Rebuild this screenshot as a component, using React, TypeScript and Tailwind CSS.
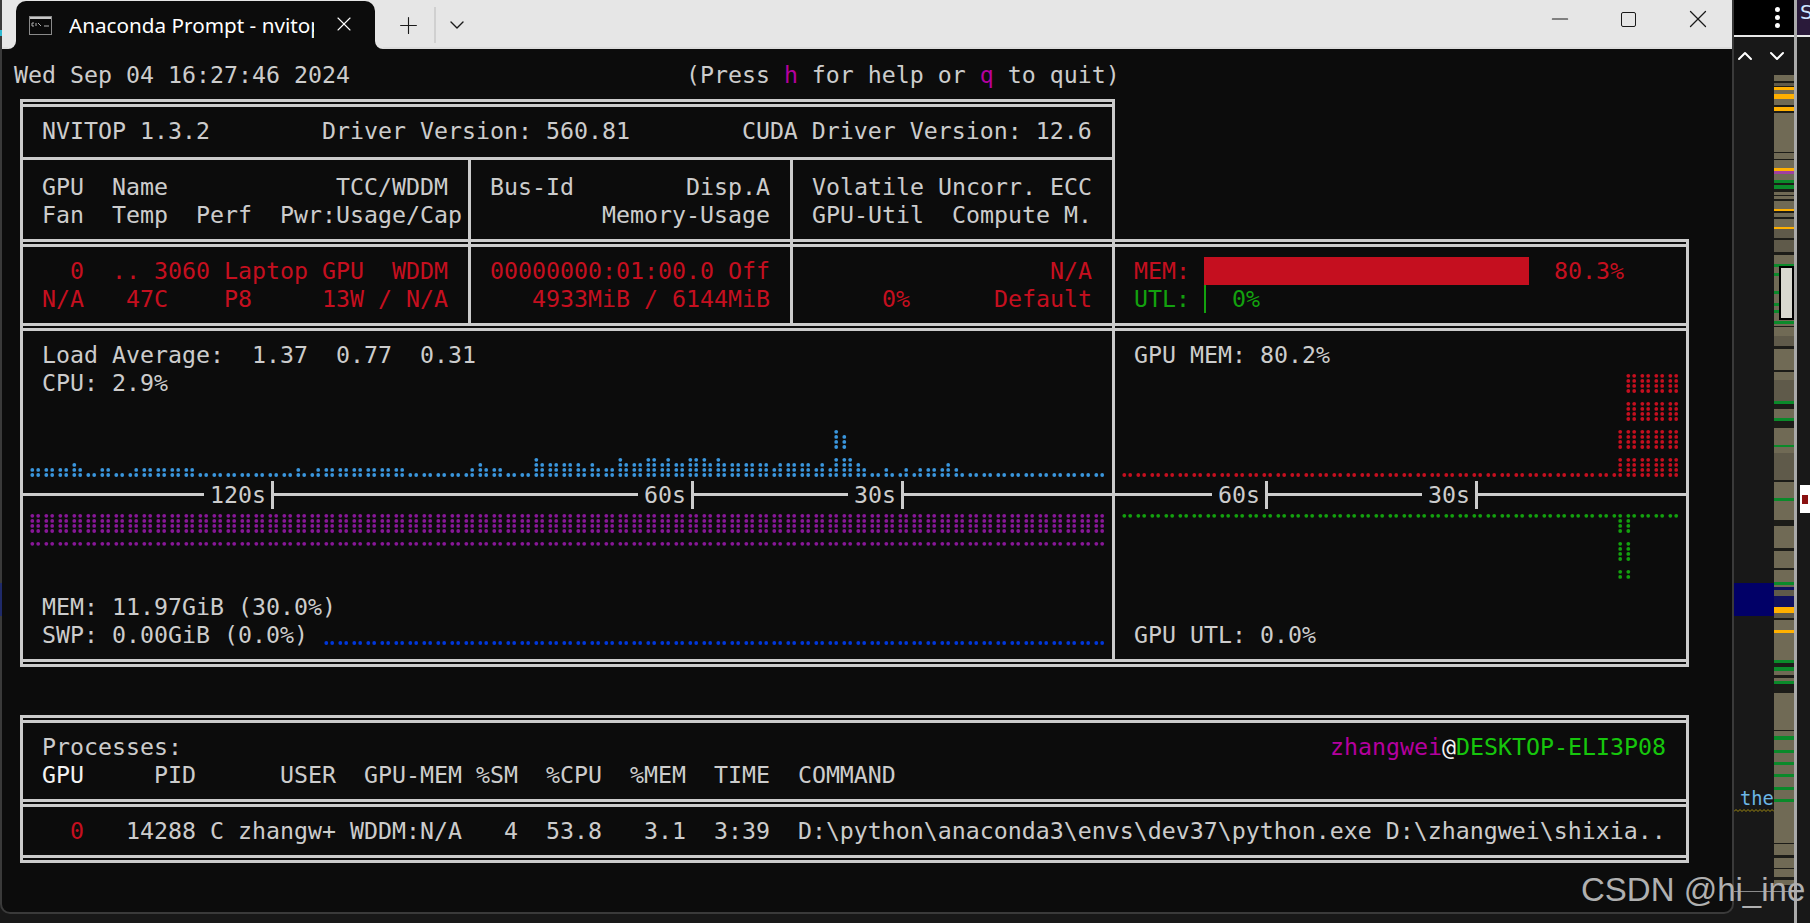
import { ChevronDown, ChevronUp, Minus, Plus, X } from 'lucide-react'
import type { ReactNode } from 'react'

const LEFT_DOTS = [0x40, 0x04, 0x02, 0x01]
const RIGHT_DOTS = [0x80, 0x20, 0x10, 0x08]

// height of the two dot columns in one braille cell, counted from the bottom
function braille(l: number, r: number) {
  let bits = 0
  for (let i = 0; i < l; i++) bits |= LEFT_DOTS[i]
  for (let i = 0; i < r; i++) bits |= RIGHT_DOTS[i]
  return bits === 0 ? ' ' : String.fromCodePoint(0x2800 + bits)
}

const cpuHistory: [number, number][] = [
  [2, 2], [2, 2], [2, 2], [3, 2], [1, 1], [2, 2], [1, 1], [1, 2], [2, 2], [2, 2], [2, 2], [2, 2],
  [1, 1], [1, 1], [1, 1], [1, 1], [1, 1], [1, 1], [1, 1], [2, 1], [1, 2], [2, 2], [2, 2], [2, 2],
  [2, 2], [2, 2], [2, 2], [1, 1], [1, 1], [1, 1], [1, 1], [1, 2], [3, 2], [2, 2], [1, 1], [1, 1],
  [4, 3], [3, 3], [3, 3], [3, 2], [3, 2], [2, 2], [4, 3], [3, 3], [4, 4], [3, 4], [3, 3], [4, 4],
  [4, 3], [4, 3], [3, 3], [3, 3], [3, 3], [2, 3], [3, 3], [3, 3], [2, 3], [2, 8], [7, 4], [3, 2],
  [1, 1], [2, 1], [1, 2], [1, 2], [2, 2], [2, 3], [2, 1], [1, 1], [1, 1], [1, 1], [1, 1], [1, 1],
  [1, 1], [1, 1], [1, 1], [1, 1], [1, 1],
]
const cpuUpper = cpuHistory.map(([l, r]) => braille(Math.max(l - 4, 0), Math.max(r - 4, 0))).join('')
const cpuLower = cpuHistory.map(([l, r]) => braille(Math.min(l, 4), Math.min(r, 4))).join('')

// the terminal draws its graphs in braille; the dots are placed by hand at the cell pitch
const DOT_X = [4.3, 10.2]
const DOT_Y = [6.8, 11.9, 16.9, 22]
const DOT_BITS: [number, number, number][] = [
  [0x01, 0, 0], [0x02, 0, 1], [0x04, 0, 2], [0x40, 0, 3],
  [0x08, 1, 0], [0x10, 1, 1], [0x20, 1, 2], [0x80, 1, 3],
]

function DotRow({ cells, color }: { cells: string; color: string }) {
  const chars = Array.from(cells)
  return (
    <svg className="block shrink-0" width={chars.length * 14} height="28" fill={color}>
      {chars.map((ch, i) => {
        const bits = ch === ' ' ? 0 : ch.codePointAt(0)! - 0x2800
        return DOT_BITS.filter(([bit]) => bits & bit).map(([bit, cx, cy]) => (
          <circle key={`${i}-${bit}`} cx={i * 14 + DOT_X[cx]} cy={DOT_Y[cy]} r="1.9" />
        ))
      })}
    </svg>
  )
}

// [end y, colour] of each band of the editor minimap
const TAN = '#706a55'
const DARK = '#1c1c18'
const ORANGE = '#ffb000'
const GREEN = '#0a8a2a'
const NAVY = '#101060'
const minimap: [number, string][] = [
  [81, TAN], [83, DARK], [86, '#5f5a4a'], [87, DARK], [90, ORANGE], [94, TAN], [99, ORANGE], [105, TAN], [107, DARK],
  [111, ORANGE], [113, DARK], [152, TAN], [153, DARK], [159, TAN], [160, DARK], [168, TAN], [170, ORANGE], [171, ORANGE],
  [174, '#a040a0'], [180, TAN], [183, GREEN], [185, DARK], [189, GREEN], [192, DARK], [195, TAN], [196, DARK], [199, TAN],
  [201, DARK], [209, TAN], [211, ORANGE], [213, DARK], [217, TAN], [219, DARK], [227, TAN], [229, ORANGE], [238, '#5f5a4a'],
  [240, DARK], [252, '#5f5a4a'], [255, DARK], [264, TAN], [267, GREEN], [273, TAN], [276, GREEN], [291, TAN], [294, GREEN],
  [303, TAN], [306, GREEN], [310, TAN], [313, GREEN], [321, TAN], [324, GREEN], [326, TAN], [327, DARK], [336, TAN],
  [346, '#5f5a4a'], [349, DARK], [370, TAN], [372, DARK], [380, TAN], [401, '#5f5a4a'], [404, GREEN], [409, DARK], [418, TAN],
  [421, GREEN], [428, DARK], [445, TAN], [447, GREEN], [453, TAN], [480, '#5f5a4a'], [482, DARK], [498, TAN], [501, GREEN],
  [520, TAN], [526, DARK], [548, TAN], [551, DARK], [568, TAN], [570, DARK], [582, TAN], [585, GREEN], [587, TAN],
  [590, NAVY], [596, '#5f5a4a'], [600, NAVY], [607, NAVY], [613, ORANGE], [618, '#5f5a4a'], [620, DARK], [623, TAN], [630, TAN],
  [633, ORANGE], [660, TAN], [663, GREEN], [667, DARK], [671, GREEN], [675, TAN], [678, DARK], [681, TAN], [684, GREEN],
  [693, DARK], [730, TAN], [731, DARK], [736, TAN], [740, GREEN], [750, TAN], [753, GREEN], [762, TAN], [765, GREEN],
  [774, TAN], [777, GREEN], [787, TAN], [790, GREEN], [799, TAN], [802, GREEN], [843, TAN], [844, DARK], [855, TAN],
  [858, DARK], [868, TAN], [869, DARK], [877, TAN], [880, DARK], [885, TAN],
]

type Vert = 'full' | 'down' | 'up' | 'tee'

// tee: the stem stops at the first line of the pair, the second line runs on under it
const doubleVert: Record<Vert, string> = {
  full: 'h-7 bg-[#cccccc]',
  down: 'mt-[10px] h-[18px] bg-[#cccccc]',
  up: 'h-[18px] bg-[#cccccc]',
  tee: 'h-[18px] border-t-[13px] border-b-[3px] border-[#cccccc]',
}
const singleVert: Record<Vert, string> = {
  full: 'h-7 bg-[#cccccc]',
  down: 'mt-[12px] h-4 bg-[#cccccc]',
  up: 'h-[15px] bg-[#cccccc]',
  tee: 'h-[15px] bg-[#cccccc]',
}

function Rule({ segs, end, single }: { segs: [number, Vert][]; end: Vert; single?: boolean }) {
  const vert = single ? singleVert : doubleVert
  return (
    <div className="flex h-7 ml-[6px]">
      {segs.map(([width, v], i) => (
        <div key={i} className="flex shrink-0" style={{ width }}>
          <div className={`w-[3px] shrink-0 ${vert[v]}`} />
          {single ? (
            <div className="flex-1 h-[3px] mt-[12px] bg-[#cccccc]" />
          ) : (
            <div className="flex-1 h-2 mt-[10px] border-y-[3px] border-[#cccccc]" />
          )}
        </div>
      ))}
      <div className={`w-[3px] shrink-0 ${vert[end]}`} />
    </div>
  )
}

function Cell({ className, children }: { className: string; children: ReactNode }) {
  return <div className={`shrink-0 border-l-[3px] border-[#cccccc] ${className}`}>{children}</div>
}

function Line({ className = '', children }: { className?: string; children?: ReactNode }) {
  return <div className={`h-7 pl-[5px] whitespace-pre ${className}`}>{children}</div>
}

function AxisLine({ className }: { className: string }) {
  return <div className={`h-[3px] mt-[12px] bg-[#cccccc] ${className}`} />
}

function AxisLabel({ text }: { text: string }) {
  return (
    <>
      <span className="ml-[6px]">{text}</span>
      <div className="w-[3px] h-7 ml-[5px] shrink-0 bg-[#cccccc]" />
    </>
  )
}

function TitleBar() {
  return (
    <div className="flex h-[49px] shrink-0 border-b-2 border-[#dcdcdc] bg-[#e6e6e6] text-[#1a1a1a]">
      <div className="relative flex items-center w-[359px] h-[48px] ml-[14px] mt-[1px] rounded-t-[10px] bg-[#0c0c0c] text-white">
        <div className="absolute -left-2 bottom-0 w-2 h-2 bg-[#0c0c0c]">
          <div className="w-2 h-2 rounded-br-lg bg-[#e6e6e6]" />
        </div>
        <div className="absolute -right-2 bottom-0 w-2 h-2 bg-[#0c0c0c]">
          <div className="w-2 h-2 rounded-bl-lg bg-[#e6e6e6]" />
        </div>
        <svg className="ml-[13px] shrink-0" width="23" height="19" viewBox="0 0 23 19">
          <rect x="0.5" y="0.5" width="22" height="18" fill="#0a0a0a" stroke="#8a8a8a" />
          <rect x="1" y="1" width="21" height="2" fill="#c8c8c8" />
          <path d="M3 7h2M3 7v3h2M7 7v3M9 7l3 3M15 10h5" stroke="#b0b0b0" strokeWidth="1" fill="none" />
        </svg>
        <div className="ml-[17px] w-[245px] overflow-hidden whitespace-nowrap font-['Noto_Sans',sans-serif] text-[20.7px] leading-[28px]">
          Anaconda Prompt - nvitop
        </div>
        <X className="ml-[18px] shrink-0 -mt-[2px]" size={24} strokeWidth={1.1} />
      </div>
      <Plus className="ml-[20px] mt-[12px] shrink-0" size={27} strokeWidth={1} />
      <div className="ml-[12px] mt-[7px] w-[2px] h-[36px] bg-[#d0d0d0]" />
      <ChevronDown className="ml-[9px] mt-[13px] shrink-0" size={24} strokeWidth={1.4} />
      <div className="ml-auto flex">
        <div className="flex w-[69px] h-[38px] items-center justify-center">
          <Minus size={26} strokeWidth={1.1} />
        </div>
        <div className="flex w-[69px] h-[38px] items-center justify-center">
          <div className="w-[15px] h-[15px] rounded-[2px] border-[1.5px] border-[#1a1a1a]" />
        </div>
        <div className="flex w-[69px] h-[38px] items-center justify-center">
          <X size={30} strokeWidth={1.05} />
        </div>
      </div>
    </div>
  )
}

function Terminal() {
  return (
    <div className="pl-[12px] pt-[12px] font-['DejaVu_Sans_Mono',monospace] text-[23.26px] leading-7 text-[#cccccc]">
      <div className="h-7 whitespace-pre">
        {'Wed Sep 04 16:27:46 2024                        (Press '}
        <span className="text-[#b4009e]">h</span>
        {' for help or '}
        <span className="text-[#b4009e]">q</span>
        {' to quit)'}
      </div>

      <Rule segs={[[1092, 'down']]} end="down" />
      <div className="flex ml-[6px]">
        <Cell className="w-[1095px] border-r-[3px]">
          <Line> NVITOP 1.3.2        Driver Version: 560.81        CUDA Driver Version: 12.6</Line>
        </Cell>
      </div>
      <Rule single segs={[[448, 'full'], [322, 'down'], [322, 'down']]} end="full" />
      <div className="flex ml-[6px]">
        <Cell className="w-[448px]">
          <Line> GPU  Name            TCC/WDDM</Line>
          <Line> Fan  Temp  Perf  Pwr:Usage/Cap</Line>
        </Cell>
        <Cell className="w-[322px]">
          <Line> Bus-Id        Disp.A</Line>
          <Line>         Memory-Usage</Line>
        </Cell>
        <Cell className="w-[325px] border-r-[3px]">
          <Line> Volatile Uncorr. ECC</Line>
          <Line> GPU-Util  Compute M.</Line>
        </Cell>
      </div>
      <Rule segs={[[448, 'full'], [322, 'full'], [322, 'full'], [574, 'full']]} end="down" />

      <div className="flex ml-[6px]">
        <Cell className="w-[448px] text-[#c50f1f]">
          <Line>   0  .. 3060 Laptop GPU  WDDM</Line>
          <Line> N/A   47C    P8     13W / N/A</Line>
        </Cell>
        <Cell className="w-[322px] text-[#c50f1f]">
          <Line> 00000000:01:00.0 Off</Line>
          <Line>    4933MiB / 6144MiB</Line>
        </Cell>
        <Cell className="w-[322px] text-[#c50f1f]">
          <Line>                  N/A</Line>
          <Line>      0%      Default</Line>
        </Cell>
        <Cell className="w-[577px] border-r-[3px]">
          <Line className="flex text-[#c50f1f]">
            <span> MEM: </span>
            <div className="w-[325px] h-7 bg-[#c50f1f]" />
            <span className="ml-[25px]">80.3%</span>
          </Line>
          <Line className="flex text-[#13a10e]">
            <span> UTL: </span>
            <div className="w-[2px] h-7 bg-[#13a10e]" />
            <span className="ml-[26px]">0%</span>
          </Line>
        </Cell>
      </div>
      <Rule segs={[[448, 'full'], [322, 'tee'], [322, 'tee'], [574, 'full']]} end="full" />

      <div className="flex ml-[6px]">
        <Cell className="w-[1092px]">
          <Line> Load Average:  1.37  0.77  0.31</Line>
          <Line> CPU: 2.9%</Line>
          <Line />
          <Line><DotRow cells={cpuUpper} color="#3a96dd" /></Line>
          <Line><DotRow cells={cpuLower} color="#3a96dd" /></Line>
          <div className="flex h-7 whitespace-pre">
            <AxisLine className="w-[181px]" />
            <AxisLabel text="120s" />
            <AxisLine className="w-[364px]" />
            <AxisLabel text="60s" />
            <AxisLine className="w-[154px]" />
            <AxisLabel text="30s" />
            <AxisLine className="flex-1" />
          </div>
          <Line><DotRow cells={'⣿'.repeat(77)} color="#881798" /></Line>
          <Line><DotRow cells={'⠉'.repeat(77)} color="#881798" /></Line>
          <Line />
          <Line> MEM: 11.97GiB (30.0%)</Line>
          <Line className="flex">
            <span> SWP: 0.00GiB (0.0%) </span>
            <DotRow cells={'⣀'.repeat(56)} color="#0037da" />
          </Line>
        </Cell>
        <Cell className="w-[577px] border-r-[3px]">
          <Line> GPU MEM: 80.2%</Line>
          <Line><DotRow cells={' '.repeat(36) + '⣿⣿⣿⣿'} color="#c50f1f" /></Line>
          <Line><DotRow cells={' '.repeat(36) + '⣿⣿⣿⣿'} color="#c50f1f" /></Line>
          <Line><DotRow cells={' '.repeat(35) + '⢸⣿⣿⣿⣿'} color="#c50f1f" /></Line>
          <Line><DotRow cells={'⣀'.repeat(35) + '⣸⣿⣿⣿⣿'} color="#c50f1f" /></Line>
          <div className="flex h-7 whitespace-pre">
            <AxisLine className="w-[97px]" />
            <AxisLabel text="60s" />
            <AxisLine className="w-[154px]" />
            <AxisLabel text="30s" />
            <AxisLine className="flex-1" />
          </div>
          <Line><DotRow cells={'⠉'.repeat(35) + '⢹⡏⠉⠉⠉'} color="#13a10e" /></Line>
          <Line><DotRow cells={' '.repeat(35) + '⢸⡇'} color="#13a10e" /></Line>
          <Line><DotRow cells={' '.repeat(35) + '⠘⠃'} color="#13a10e" /></Line>
          <Line />
          <Line> GPU UTL: 0.0%</Line>
        </Cell>
      </div>
      <Rule segs={[[1092, 'up'], [574, 'tee']]} end="up" />

      <div className="h-7" />

      <Rule segs={[[1666, 'down']]} end="down" />
      <div className="flex ml-[6px]">
        <Cell className="w-[1669px] border-r-[3px]">
          <Line className="flex justify-between pr-[20px]">
            <span> Processes:</span>
            <span>
              <span className="text-[#b4009e]">zhangwei</span>
              <span className="text-[#f2f2f2]">@</span>
              <span className="text-[#16c60c]">DESKTOP-ELI3P08</span>
            </span>
          </Line>
          <Line>
            {' '}
            <span className="text-[#f2f2f2]">GPU</span>
            {'     PID      USER  GPU-MEM %SM  %CPU  %MEM  TIME  COMMAND'}
          </Line>
        </Cell>
      </div>
      <Rule segs={[[1666, 'full']]} end="full" />
      <div className="flex ml-[6px]">
        <Cell className="w-[1669px] border-r-[3px]">
          <Line>
            {'   '}
            <span className="text-[#c50f1f]">0</span>
            {'   14288 C zhangw+ WDDM:N/A   4  53.8   3.1  3:39  D:\\python\\anaconda3\\envs\\dev37\\python.exe D:\\zhangwei\\shixia..'}
          </Line>
        </Cell>
      </div>
      <Rule segs={[[1666, 'up']]} end="up" />
    </div>
  )
}

function EditorStrip() {
  let prev = 75
  return (
    <div className="flex w-[76px] shrink-0">
      <div className="w-[60px] shrink-0">
        <div className="flex flex-col items-end pr-[14px] justify-center gap-[3px] h-[35px] bg-black">
          <div className="w-[5px] h-[5px] rounded-full bg-white" />
          <div className="w-[5px] h-[5px] rounded-full bg-white" />
          <div className="w-[5px] h-[5px] rounded-full bg-white" />
        </div>
        <div className="h-[2px] bg-[#e8e8e8]" />
        <div className="flex h-[38px] text-white">
          <ChevronUp className="ml-[-1px] mt-[7px]" size={24} strokeWidth={2} />
          <ChevronDown className="ml-[8px] mt-[7px]" size={24} strokeWidth={2} />
        </div>
        <div className="flex h-[810px]">
          <div className="w-[40px] shrink-0">
            <div className="mt-[508px] h-[33px] bg-[#010067]" />
            <div className="mt-[174px] h-[18px] pl-[6px] font-['DejaVu_Sans_Mono',monospace] text-[18.8px] leading-[18px] text-[#6cb6e6]">
              the
            </div>
            <svg width="40" height="5" viewBox="0 0 40 5" className="block">
              <path d="M0 3.5 l2 -2 l2 2 l2 -2 l2 2 l2 -2 l2 2 l2 -2 l2 2 l2 -2 l2 2 l2 -2 l2 2 l2 -2 l2 2 l2 -2 l2 2 l2 -2 l2 2 l2 -2 l2 2" stroke="#a08a10" strokeWidth="1" fill="none" />
            </svg>
          </div>
          <div className="relative w-[20px]">
            {minimap.map(([end, color], i) => {
              const height = end - prev
              prev = end
              return <div key={i} style={{ height, backgroundColor: color }} />
            })}
            <div className="absolute left-[5px] top-[191px] w-[15px] h-[54px] border-2 border-black bg-[#d8d8d0]" />
          </div>
        </div>
        <div className="mt-[6px] h-[1px] bg-[#8a8a8a]" />
      </div>
      <div className="w-[3px] shrink-0 bg-[#aaaaaa]" />
      <div className="flex-1 min-w-0">
        <div className="h-[35px] overflow-hidden bg-[#2a1a3a] pl-[3px] font-['DejaVu_Sans',sans-serif] text-[20px] leading-[24px] text-[#cfe4ff]">
          S
        </div>
        <div className="h-[2px] bg-[#e8e8e8]" />
        <div className="mt-[448px] ml-[3px] flex h-[28px] items-center justify-center bg-white">
          <div className="w-[6px] h-[9px] bg-[#8a1010]" />
        </div>
      </div>
    </div>
  )
}

export default function App() {
  return (
    <div className="relative flex w-[1810px] h-[923px] overflow-hidden bg-[#181818]">
      <div className="flex flex-col w-[1734px] h-[914px] shrink-0 overflow-hidden rounded-b-[10px] border-x-2 border-b-2 border-[#3a3a3a] bg-[#0c0c0c]">
        <TitleBar />
        <Terminal />
      </div>
      <EditorStrip />
      <div className="absolute left-0 top-[583px] w-[2px] h-[33px] bg-[#1f2a6a]" />
      <div className="absolute left-0 top-[30px] w-[2px] h-[6px] bg-[#2fb8d0]" />
      <div className="absolute left-[1581px] top-[871px] font-['Liberation_Sans',sans-serif] text-[33px] leading-[38px] whitespace-pre text-[#b0b0b0]">
        CSDN @hi_ine
      </div>
    </div>
  )
}
